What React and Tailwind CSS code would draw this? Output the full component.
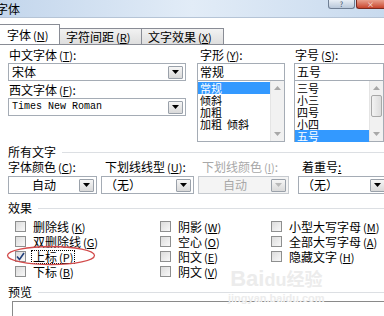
import React from 'react';

const M = ({ c }) => (
  <span className="ml-[2px] text-[11px]">
    (<u>{c}</u>)
  </span>
);

const Arrow = ({ disabled }) => (
  <span className="w-[15px] h-[13px] mr-[2px] border border-[#9aa1aa] rounded-[1px] bg-gradient-to-b from-[#f6f6f6] to-[#d9d9d9] flex items-center justify-center">
    <svg width="7" height="4" viewBox="0 0 7 4">
      <path d="M0 0h7L3.5 4z" fill={disabled ? '#b8b8b8' : '#000'} />
    </svg>
  </span>
);

const Combo = ({ children, center, disabled, mono }) => (
  <div
    className={`h-[18px] flex items-center border ${
      disabled ? 'border-[#c6cacf] bg-[#f4f4f4] text-[#a8a8a8]' : 'border-[#a5acb5] bg-white text-black'
    }`}
  >
    <div
      className={`flex-1 px-[3px] leading-[12px] ${center ? 'text-center' : ''} ${
        mono ? "font-['Liberation_Mono',monospace] text-[10px]" : ''
      }`}
    >
      {children}
    </div>
    <Arrow disabled={disabled} />
  </div>
);

const ScrollArrow = ({ up }) => (
  <div className="h-[14px] flex items-center justify-center">
    <svg width="7" height="4" viewBox="0 0 7 4">
      <path d={up ? 'M0 4h7L3.5 0z' : 'M0 0h7L3.5 4z'} fill="#a8a8a8" />
    </svg>
  </div>
);

const ListBox = ({ items, selected, thumb }) => (
  <div className="h-[62px] -mt-px border border-[#a5acb5] bg-white flex">
    <div className="flex-1 pt-px">
      {items.map((it) => (
        <div
          key={it}
          className={`h-[12px] text-[11px] leading-[12px] pl-[2px] whitespace-pre ${
            it === selected ? 'bg-[#3399ff] text-white' : ''
          }`}
        >
          {it}
        </div>
      ))}
    </div>
    <div className="w-[14px] bg-[#f1f1f1] border-l border-[#e4e4e4] flex flex-col justify-between">
      <div>
        <ScrollArrow up />
        {thumb && (
          <div className="h-[22px] mx-[1px] border border-[#a8a8a8] rounded-[2px] bg-gradient-to-r from-[#f3f3f3] to-[#dcdcdc]" />
        )}
      </div>
      <ScrollArrow />
    </div>
  </div>
);

const Header = ({ children, mt }) => (
  <div className={`flex items-center pl-[8px] ${mt}`}>
    <span className="leading-[12px]">{children}</span>
    <div className="flex-1 ml-[6px] h-px bg-[#dcdfe3]" />
  </div>
);

const Check = ({ label, m, checked, focus }) => (
  <div className="h-[15px] flex items-center">
    <span className="w-[11px] h-[11px] border border-[#8e8f8f] bg-gradient-to-br from-[#dcdcdc] to-[#f8f8f8] flex items-center justify-center">
      {checked && (
        <svg width="9" height="9" viewBox="0 0 9 9">
          <path d="M1 4.5L3.5 7.5L8 1" stroke="#22407a" strokeWidth="1.6" fill="none" />
        </svg>
      )}
    </span>
    <span
      className={`ml-[6px] leading-[12px] px-px ${focus ? 'outline outline-1 outline-dotted outline-black' : ''}`}
    >
      {label}
      <M c={m} />
    </span>
  </div>
);

export default function App() {
  return (
    <div className="relative w-[384px] h-[316px] overflow-hidden bg-white text-[12px] text-black font-['Noto_Sans_CJK_SC',sans-serif]">
      {/* title bar */}
      <div className="h-[18px] flex items-start justify-between bg-gradient-to-r from-[#c3d6ec] via-[#e2ecf7] to-[#c8daee] border-b border-[#b5c4d6]">
        <span className="-ml-[4px] mt-[2px] text-[12px] leading-[13px]">字体</span>
        <div className="flex">
          <div className="w-[27px] h-[9px] rounded-b-[3px] border border-t-0 border-[#6f7f94] bg-gradient-to-b from-[#e8eef5] to-[#b9c8da] flex items-center justify-center text-[7px] leading-[7px] text-[#3a4a5e]">
            ?
          </div>
          <div className="w-[28px] h-[9px] ml-px rounded-bl-[3px] border border-t-0 border-r-0 border-[#7a2a20] bg-gradient-to-b from-[#e8a08e] to-[#c7432c] flex items-center justify-center text-[7px] leading-[7px] text-white">
            ×
          </div>
        </div>
      </div>

      {/* tabs */}
      <div className="mt-[7px] h-[20px] flex items-end border-b border-[#898c95]">
        <div className="w-[60px] h-[20px] border border-b-0 border-l-0 border-[#898c95] bg-white flex items-center pl-[7px] leading-[12px]">
          字体<M c="N" />
        </div>
        <div className="w-[82px] h-[16px] border border-l-0 border-b-0 border-[#898c95] bg-gradient-to-b from-[#f2f2f2] to-[#dedede] flex items-center pl-[6px] leading-[12px]">
          字符间距<M c="R" />
        </div>
        <div className="w-[82px] h-[16px] border border-l-0 border-b-0 border-[#898c95] bg-gradient-to-b from-[#f2f2f2] to-[#dedede] flex items-center pl-[6px] leading-[12px]">
          文字效果<M c="X" />
        </div>
      </div>

      {/* font row */}
      <div className="mt-[4px] flex pl-[8px]">
        <div className="w-[182px]">
          <div className="leading-[12px] pl-[1px]">
            中文字体<M c="T" />:
          </div>
          <div className="mt-[2px]">
            <Combo>宋体</Combo>
          </div>
          <div className="mt-[3px] leading-[12px] pl-[1px]">
            西文字体<M c="F" />:
          </div>
          <div className="mt-[2px]">
            <Combo mono>Times New Roman</Combo>
          </div>
        </div>
        <div className="w-[90px] ml-[11px]">
          <div className="leading-[12px] pl-[3px]">
            字形<M c="Y" />:
          </div>
          <div className="mt-[2px] h-[18px] border border-[#a5acb5] leading-[16px] pl-[2px]">常规</div>
          <ListBox items={['常规', '倾斜', '加粗', '加粗  倾斜']} selected="常规" />
        </div>
        <div className="w-[90px] ml-[9px] shrink-0">
          <div className="leading-[12px] pl-px">
            字号<M c="S" />:
          </div>
          <div className="mt-[2px] h-[18px] border border-[#a5acb5] leading-[16px] pl-[2px]">五号</div>
          <ListBox items={['三号', '小三', '四号', '小四', '五号']} selected="五号" thumb />
        </div>
      </div>

      {/* all text */}
      <Header mt="mt-[4px]">所有文字</Header>
      <div className="mt-[3px] flex pl-[8px] gap-[4px]">
        <div className="w-[89px] shrink-0">
          <div className="leading-[12px]">
            字体颜色<M c="C" />:
          </div>
          <div className="mt-[3px]">
            <Combo center>自动</Combo>
          </div>
        </div>
        <div className="w-[93px] shrink-0">
          <div className="leading-[12px] pl-[4px]">
            下划线线型<M c="U" />:
          </div>
          <div className="mt-[3px]">
            <Combo>（无）</Combo>
          </div>
        </div>
        <div className="w-[91px] shrink-0">
          <div className="leading-[12px] pl-[4px] text-[#a8a8a8]">
            下划线颜色<M c="I" />:
          </div>
          <div className="mt-[3px]">
            <Combo center disabled>自动</Combo>
          </div>
        </div>
        <div className="w-[90px] shrink-0 ml-[5px]">
          <div className="leading-[12px] pl-[4px]">
            着重号<u>:</u>
          </div>
          <div className="mt-[3px]">
            <Combo>（无）</Combo>
          </div>
        </div>
      </div>

      {/* effects */}
      <Header mt="mt-[8px]">效果</Header>
      <div className="mt-[5px] flex pl-[15px]">
        <div className="w-[145px]">
          <Check label="删除线" m="K" />
          <Check label="双删除线" m="G" />
          <Check label="上标" m="P" checked focus />
          <Check label="下标" m="B" />
        </div>
        <div className="w-[111px]">
          <Check label="阴影" m="W" />
          <Check label="空心" m="O" />
          <Check label="阳文" m="E" />
          <Check label="阴文" m="V" />
        </div>
        <div>
          <Check label="小型大写字母" m="M" />
          <Check label="全部大写字母" m="A" />
          <Check label="隐藏文字" m="H" />
        </div>
      </div>

      {/* preview */}
      <Header mt="mt-[7px]">预览</Header>
      <div className="mt-[3px] ml-[12px] h-[20px] border-t border-l border-[#8a8a8a] bg-white" />

      {/* red annotation ellipse */}
      <svg className="absolute left-[6px] top-[245px]" width="90" height="21" viewBox="0 0 90 21">
        <ellipse cx="45" cy="10.5" rx="43.5" ry="9" fill="none" stroke="#d24a4a" strokeWidth="1.3" />
      </svg>

      {/* watermark */}
      <div className="absolute left-[228px] top-[266px] flex flex-col items-center text-[#ececec] pointer-events-none">
        <span className="text-[22px] leading-[24px] font-['Liberation_Sans',sans-serif] font-bold">
          Bai<span className="text-[18px]">du</span>
          <span className="text-[18px] font-['Noto_Sans_CJK_SC',sans-serif]">经验</span>
        </span>
        <span className="text-[11px] leading-[12px] font-['Liberation_Sans',sans-serif] font-bold">jingyan.baidu.com</span>
      </div>
    </div>
  );
}
